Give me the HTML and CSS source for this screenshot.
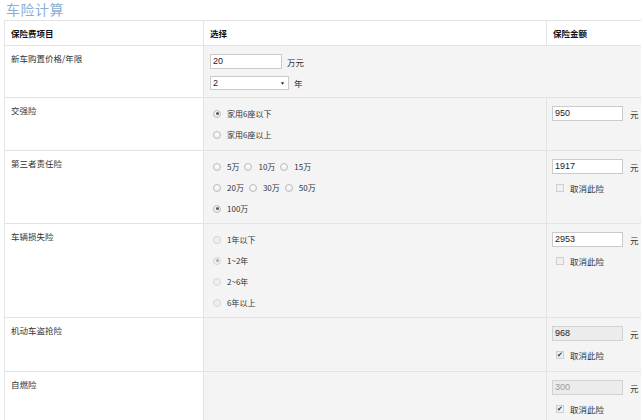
FILE: index.html
```html
<!DOCTYPE html>
<html lang="zh-CN">
<head>
<meta charset="utf-8">
<title>车险计算</title>
<link rel="stylesheet" href="styles.css">
</head>
<body>
<h1 class="title">车险计算</h1>
<table class="calc">
  <colgroup>
    <col class="c1">
    <col class="c2">
    <col class="c3">
  </colgroup>
  <thead>
    <tr class="head">
      <th>保险费项目</th>
      <th>选择</th>
      <th>保险金额</th>
    </tr>
  </thead>
  <tbody>
    <tr>
      <td class="label">新车购置价格/年限</td>
      <td class="opt" colspan="2">
        <div class="line"><span class="field w72">20</span><span class="unit">万元</span></div>
        <div class="line"><span class="select">2<span class="arrow">▼</span></span><span class="unit">年</span></div>
      </td>
    </tr>
    <tr>
      <td class="label">交强险</td>
      <td class="opt tall">
        <div class="line"><span class="radio on"></span><span class="rt">家用6座以下</span></div>
        <div class="line"><span class="radio"></span><span class="rt">家用6座以上</span></div>
      </td>
      <td class="amt tall">
        <div class="line"><span class="field w71">950</span><span class="unit">元</span></div>
      </td>
    </tr>
    <tr>
      <td class="label">第三者责任险</td>
      <td class="opt">
        <div class="line"><span class="radio"></span><span class="rt">5万</span><span class="radio"></span><span class="rt">10万</span><span class="radio"></span><span class="rt">15万</span></div>
        <div class="line"><span class="radio"></span><span class="rt">20万</span><span class="radio"></span><span class="rt">30万</span><span class="radio"></span><span class="rt">50万</span></div>
        <div class="line"><span class="radio on"></span><span class="rt">100万</span></div>
      </td>
      <td class="amt">
        <div class="line"><span class="field w71">1917</span><span class="unit">元</span></div>
        <div class="line"><span class="check"></span><span class="ct">取消此险</span></div>
      </td>
    </tr>
    <tr>
      <td class="label">车辆损失险</td>
      <td class="opt">
        <div class="line"><span class="radio dis"></span><span class="rt">1年以下</span></div>
        <div class="line"><span class="radio dis on"></span><span class="rt">1~2年</span></div>
        <div class="line"><span class="radio dis"></span><span class="rt">2~6年</span></div>
        <div class="line"><span class="radio dis"></span><span class="rt">6年以上</span></div>
      </td>
      <td class="amt">
        <div class="line"><span class="field w71">2953</span><span class="unit">元</span></div>
        <div class="line"><span class="check"></span><span class="ct">取消此险</span></div>
      </td>
    </tr>
    <tr>
      <td class="label">机动车盗抢险</td>
      <td class="opt"></td>
      <td class="amt taller">
        <div class="line"><span class="field w71 off">968</span><span class="unit">元</span></div>
        <div class="line"><span class="check on">✔</span><span class="ct">取消此险</span></div>
      </td>
    </tr>
    <tr>
      <td class="label">自燃险</td>
      <td class="opt"></td>
      <td class="amt">
        <div class="line"><span class="field w71 off grey">300</span><span class="unit">元</span></div>
        <div class="line"><span class="check on">✔</span><span class="ct">取消此险</span></div>
      </td>
    </tr>
  </tbody>
</table>
</body>
</html>
```

FILE: styles.css
```css
html, body {
  margin: 0;
  padding: 0;
  background: #ffffff;
  overflow: hidden;
}
body {
  width: 641px;
  height: 420px;
  font-family: "Noto Sans CJK SC", "Liberation Sans", sans-serif;
  color: #222;
}
.title {
  margin: 0;
  padding: 0 0 0 6px;
  height: 20px;
  line-height: 19px;
  font-size: 14px;
  font-weight: 400;
  color: #8aaed3;
  letter-spacing: 0.5px;
}
.calc {
  margin-left: 4px;
  width: 638px;
  table-layout: fixed;
  border-collapse: collapse;
  font-size: 8.5px;
}
.c1 { width: 199px; }
.c2 { width: 343px; }
.c3 { width: 96px; }
.calc th, .calc td {
  border: 1px solid #e3e3e3;
  vertical-align: top;
  text-align: left;
  padding: 0;
}
.calc th {
  height: 23px;
  line-height: 23px;
  padding: 1px 6px 0;
  font-weight: bold;
  background: #fff;
  color: #111;
}
.label {
  background: #fff;
  padding: 7px 6px 0 !important;
  line-height: 11px;
  color: #333;
}
.opt, .amt {
  background: #f5f4f5;
  padding: 5px 0 4px 5px !important;
}
.opt { padding-left: 6px !important; }
.tall { padding-bottom: 5px !important; }
.taller { padding-bottom: 6px !important; }
.line {
  height: 21px;
  display: flex;
  align-items: center;
}
.field {
  display: inline-block;
  box-sizing: border-box;
  height: 15px;
  line-height: 13px;
  border: 1px solid #cbcbcb;
  background: #fff;
  font-family: "Liberation Sans", Arial, sans-serif;
  font-size: 9px;
  padding-left: 2px;
  color: #222;
}
.w72 { width: 72px; }
.w71 { width: 71px; }
.field.off {
  background: #ececec;
  border-color: #d2d2d2;
}
.field.grey { color: #9a9a9a; }
.unit {
  margin-left: 5px;
  color: #333;
}
.amt .unit { margin-left: 7px; }
.select {
  display: inline-flex;
  justify-content: space-between;
  align-items: center;
  box-sizing: border-box;
  width: 79px;
  height: 14px;
  border: 1px solid #cbcbcb;
  background: #fff;
  font-family: "Liberation Sans", Arial, sans-serif;
  font-size: 9px;
  padding: 0 3px 0 2px;
}
.arrow {
  font-size: 5px;
  color: #222;
}
.radio {
  display: inline-block;
  box-sizing: border-box;
  width: 8px;
  height: 8px;
  margin: 0 6px 0 3px;
  border-radius: 50%;
  border: 1px solid #bdbdbd;
  background: radial-gradient(circle at 50% 35%, #ffffff, #e4e4e4);
  position: relative;
  flex: none;
}
.radio.on::after {
  content: "";
  position: absolute;
  left: 1.5px;
  top: 1.5px;
  width: 3px;
  height: 3px;
  border-radius: 50%;
  background: #555;
}
.radio.dis {
  border-color: #d6d6d6;
  background: #efefef;
}
.radio.dis.on::after { background: #aaa; }
.rt {
  margin-right: 2px;
  color: #333;
  font-size: 8px;
}
.check {
  display: inline-flex;
  align-items: center;
  justify-content: center;
  box-sizing: border-box;
  width: 8px;
  height: 8px;
  margin: 0 6px 0 4px;
  border: 1px solid #cfcfcf;
  background: #f0f0f0;
  font-size: 7px;
  line-height: 1;
  color: #333;
  flex: none;
}
.ct { color: #333; }
```
